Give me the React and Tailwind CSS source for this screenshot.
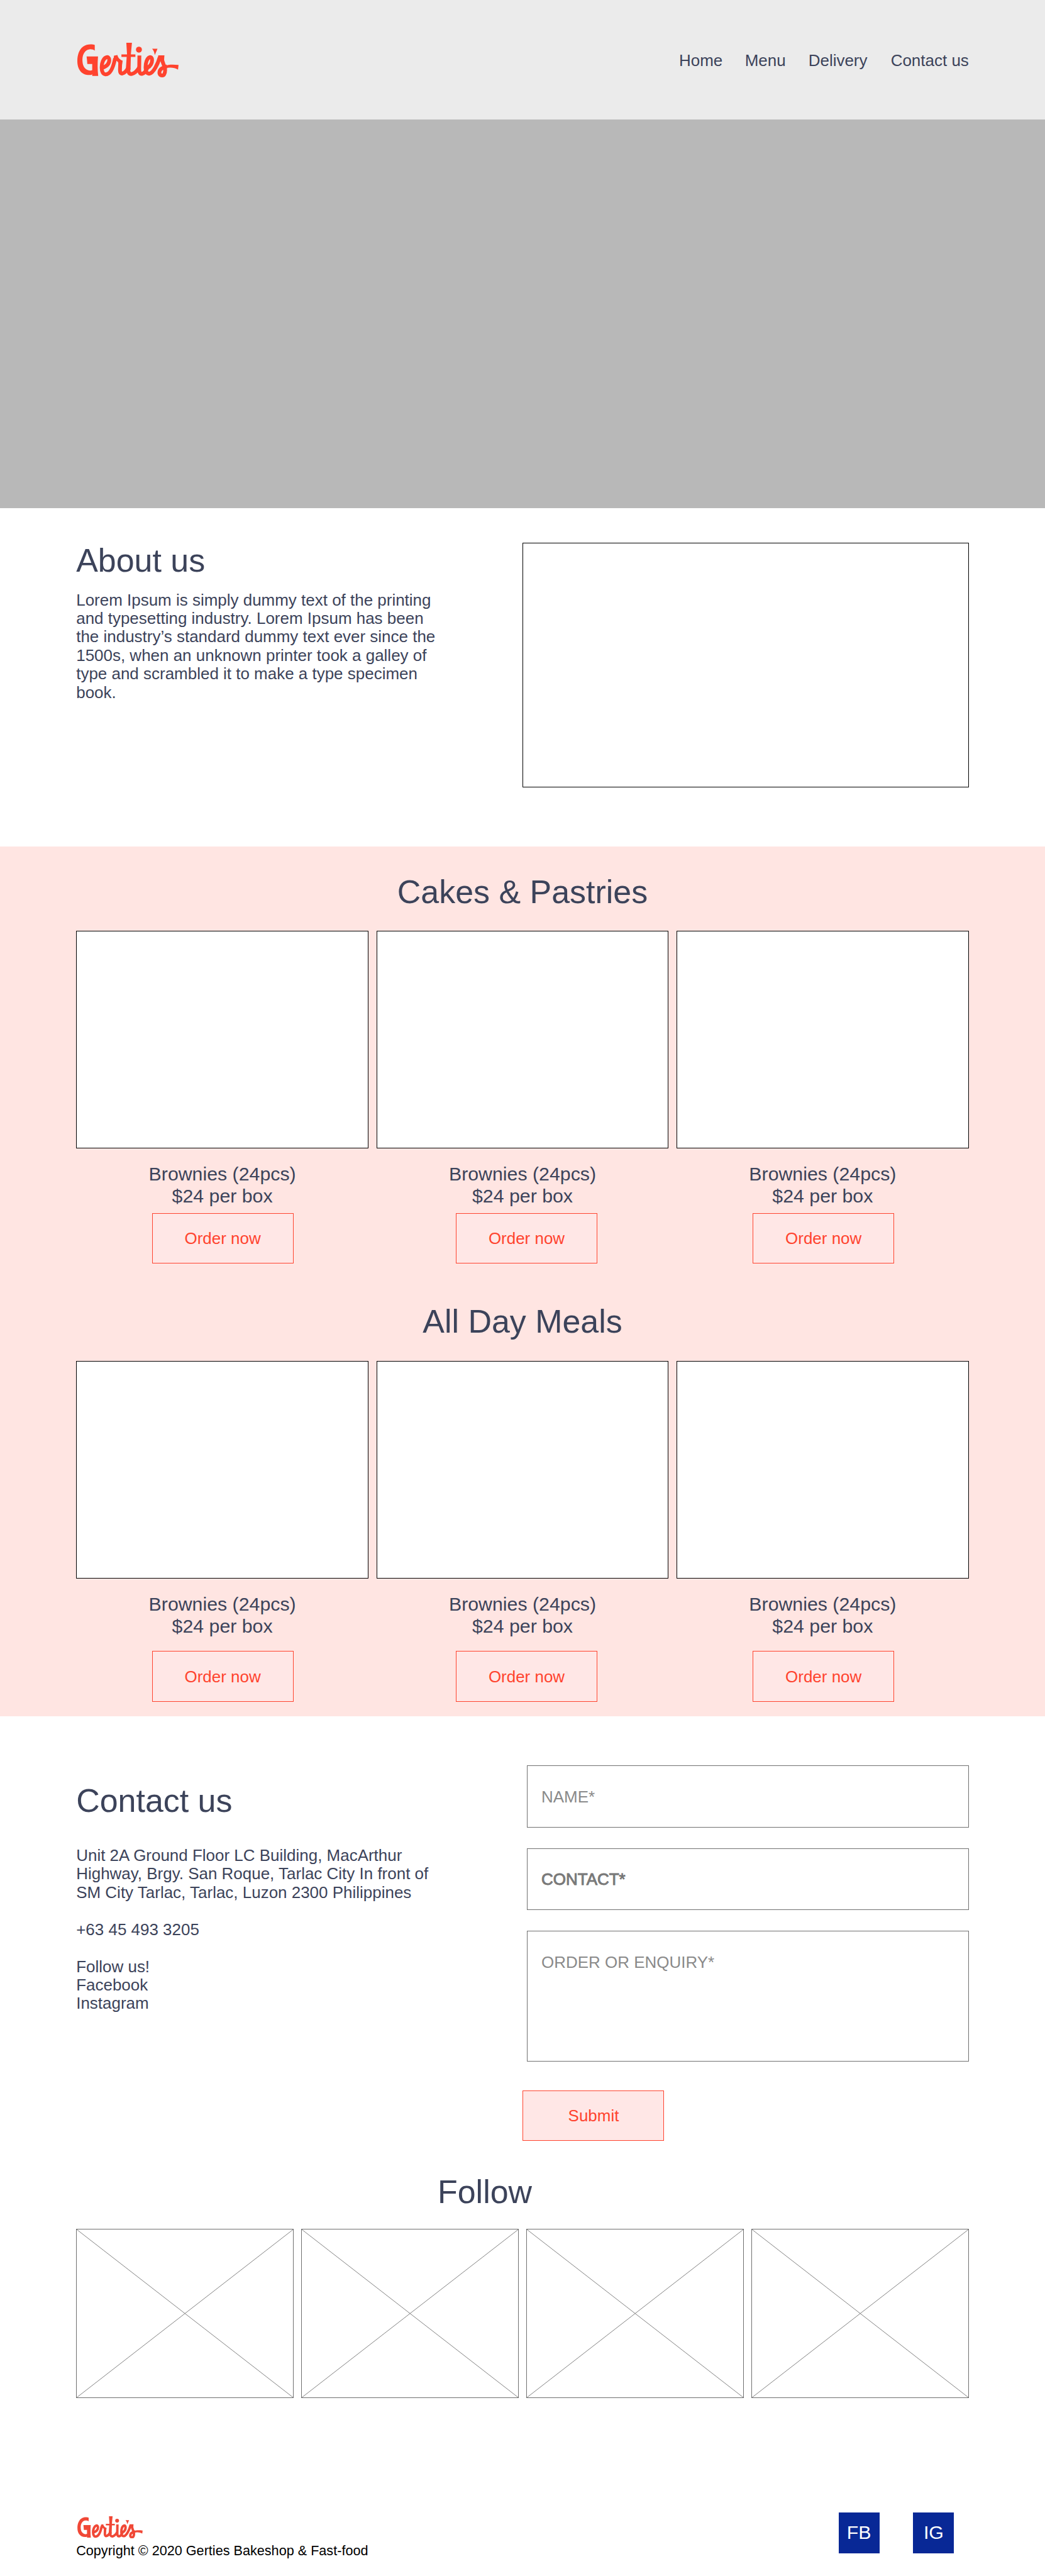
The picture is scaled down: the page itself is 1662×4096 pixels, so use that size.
const NAV = [
  { label: 'Home', gap: 'mr-[35.5px]' },
  { label: 'Menu', gap: 'mr-[36px]' },
  { label: 'Delivery', gap: 'mr-[37.2px]' },
  { label: 'Contact us', gap: '' },
];

// Horizontal nudge of the button in each column.
const COLUMNS = ['ml-[1px]', 'ml-[13px]', 'ml-[2.6px]'];

function Logo({ className }) {
  return (
    <svg viewBox="66 54 558 192" className={className} role="img" aria-label="Gertie's" fill="currentColor">
      <path d="M162 66 C150 62 120 58 97 76 C74 94 66 125 66 155 C66 198 88 233 135 232 C142 232 147 229 148 227 L148 237 L181 237 C177 200 177 165 180 129 L117 129 C119 143 120 157 121 171 L148 171 L148 205 C140 209 125 209 112 198 C97 185 94 165 94 145 C95 115 110 92 133 90 C145 89 155 92 162 97 Z" />
      <g fill="none" stroke="currentColor" strokeWidth="21" strokeLinejoin="round">
        <path d="M204 192 C232 182 242 165 242 149 C242 136 234 131 226 134 C210 139 200 165 200 190 C200 215 209 229 223 228 C247 227 263 195 274 140" />
        <path d="M302 158 C303 172 301 190 301 204 C301 220 306 225 314 223 C326 221 335 211 344 196" />
        <path d="M348 190 C344 216 352 228 366 226 C384 222 396 208 407 190" />
        <path d="M408 124 L407 200 C407 220 414 227 424 225 C438 222 446 206 452 192 C470 182 478 165 478 149 C478 136 471 131 464 134 C450 139 442 165 442 190 C442 212 450 226 464 224 C486 220 510 170 520 134" />
        <path d="M534 128 C526 160 550 176 550 205 C550 226 542 235 533 234 C518 234 516 219 521 207 C528 192 545 188 560 184" />
      </g>
      <path d="M268 125 L287 122 C289 136 303 150 316 153 L310 188 C300 170 288 158 280 152 L264 160 Z" />
      <path d="M336 54 L367 54 L361 118 L386 118 L386 132 L361 132 L359 205 L333 205 L338 132 L309 132 L309 118 L340 118 Z" />
      <circle cx="405.500" cy="92" r="16.500" />
      <path d="M478 87 L508 87 L493 122 Q489 98 478 87 Z" />
      <path d="M512 123 L546 123 L544 150 L508 160 Z" />
      <path d="M545 182 C570 172 595 174 624 176 L621 202 C602 190 575 188 552 194 Z" />
    </svg>
  );
}

function Title({ children, className = '' }) {
  return <h2 className={`text-[51.94px] leading-[58.86px] whitespace-nowrap ${className}`}>{children}</h2>;
}

function Products({ textGap, buttonGap, className }) {
  return (
    <div className={`grid grid-cols-3 gap-x-[12.5px] ${className}`}>
      {COLUMNS.map((nudge) => (
        <article key={nudge} className="flex flex-col items-center">
          <div className="h-[346.2px] w-full border border-black bg-white" />
          <p className={`text-center text-[30.3px] leading-[34.4px] ${textGap}`}>
            Brownies (24pcs)
            <br />
            $24 per box
          </p>
          <button
            className={`h-[80.5px] w-[225px] border border-[#ff432e] bg-[#ffe7e6] pt-[1.5px] text-[25.97px] leading-[29.43px] text-[#ff432e] ${buttonGap} ${nudge}`}
          >
            Order now
          </button>
        </article>
      ))}
    </div>
  );
}

function Field({ children, className }) {
  return (
    <div className={`border border-[#707070] bg-white px-[22.2px] pt-[34.8px] text-[25.97px] leading-[29.43px] ${className}`}>
      {children}
    </div>
  );
}

function CrossedBox() {
  return (
    <div className="h-[269.2px] border border-[#707070] bg-white">
      <svg className="block h-full w-full" viewBox="0 0 344 267" preserveAspectRatio="none" stroke="#707070" strokeWidth="0.87">
        <path d="M0 0 L344 267 M344 0 L0 267" fill="none" />
      </svg>
    </div>
  );
}

export default function App() {
  return (
    <div className="h-[4096px] w-[1662px] overflow-hidden bg-white font-['Liberation_Sans',Arial,sans-serif] text-[#3c435a]">
      <header className="flex h-[190.4px] items-start justify-between bg-[#ebebeb] px-[121.2px]">
        <Logo className="mt-[67.5px] ml-[1.7px] h-[55.4px] w-[161px] text-[#ff432e]" />
        <nav className="mt-[82px] flex text-[25.97px] leading-[29.43px]">
          {NAV.map((item) => (
            <a key={item.label} className={item.gap}>
              {item.label}
            </a>
          ))}
        </nav>
      </header>

      <div className="h-[618.1px] bg-[#b8b8b8]" />

      <section className="flex h-[537.1px] justify-between px-[121.2px] pt-[54px]">
        <div>
          <Title>About us</Title>
          <p className="mt-[18.2px] text-[25.97px] leading-[29.43px] whitespace-nowrap">
            Lorem Ipsum is simply dummy text of the printing
            <br />
            and typesetting industry. Lorem Ipsum has been
            <br />
            the industry’s standard dummy text ever since the
            <br />
            1500s, when an unknown printer took a galley of
            <br />
            type and scrambled it to make a type specimen
            <br />
            book.
          </p>
        </div>
        <div className="mt-[0.5px] h-[389.5px] w-[709.4px] border border-black bg-white" />
      </section>

      <section className="h-[1383.3px] bg-[#ffe5e2] px-[121.2px] pt-[43.5px]">
        <Title className="text-center">Cakes &amp; Pastries</Title>
        <Products className="mt-[32.2px]" textGap="mt-[24.1px]" buttonGap="mt-[9.3px]" />
        <Title className="mt-[63.1px] text-center">All Day Meals</Title>
        <Products className="mt-[33px]" textGap="mt-[24.3px]" buttonGap="mt-[22.1px]" />
      </section>

      <section className="flex h-[675.5px] justify-between px-[121.2px]">
        <div className="pt-[105px]">
          <Title>Contact us</Title>
          <p className="mt-[43.2px] text-[25.97px] leading-[29.43px] whitespace-nowrap">
            Unit 2A Ground Floor LC Building, MacArthur
            <br />
            Highway, Brgy. San Roque, Tarlac City In front of
            <br />
            SM City Tarlac, Tarlac, Luzon 2300 Philippines
            <br />
            <br />
            +63 45 493 3205
            <br />
            <br />
            Follow us!
            <br />
            Facebook
            <br />
            Instagram
          </p>
        </div>
        <form className="flex w-[709.8px] flex-col items-end pt-[78.2px]">
          <Field className="h-[98.7px] w-[703px] text-[#8a8a8a]">NAME*</Field>
          <Field className="mt-[32.9px] h-[98.7px] w-[703px] text-[#808080] [-webkit-text-stroke:0.9px_#707070]">CONTACT*</Field>
          <Field className="mt-[32.9px] h-[207.7px] w-[703px] text-[#8a8a8a]">ORDER OR ENQUIRY*</Field>
          <button
            type="button"
            className="mt-[45.9px] h-[80.5px] w-[225px] self-start border border-[#ff432e] bg-[#ffe7e6] pt-[1.5px] pl-[1px] text-[25.97px] leading-[29.43px] text-[#ff432e]"
          >
            Submit
          </button>
        </form>
      </section>

      <section className="px-[121.2px] pt-[51.2px]">
        <Title className="pl-[574.8px]">Follow</Title>
        <div className="mt-[29.3px] grid grid-cols-4 gap-x-[11.5px]">
          <CrossedBox />
          <CrossedBox />
          <CrossedBox />
          <CrossedBox />
        </div>
      </section>

      <footer className="flex justify-between pt-[181.7px] pr-[144.6px] pl-[121.2px]">
        <div className="pt-[6.1px]">
          <Logo className="ml-[1.6px] h-[35.7px] w-[104px] text-[#f04836]" />
          <p className="mt-[7.5px] text-[21.64px] leading-[24.2px] text-black">
            Copyright © 2020 Gerties Bakeshop &amp; Fast-food
          </p>
        </div>
        <div className="flex gap-[53.7px] text-[30.3px] leading-[34.6px] text-white">
          <a className="flex h-[65px] w-[65px] items-center justify-center bg-[#082896] pt-[1px]">FB</a>
          <a className="flex h-[65px] w-[65px] items-center justify-center bg-[#082896] pt-[1px]">IG</a>
        </div>
      </footer>
    </div>
  );
}
